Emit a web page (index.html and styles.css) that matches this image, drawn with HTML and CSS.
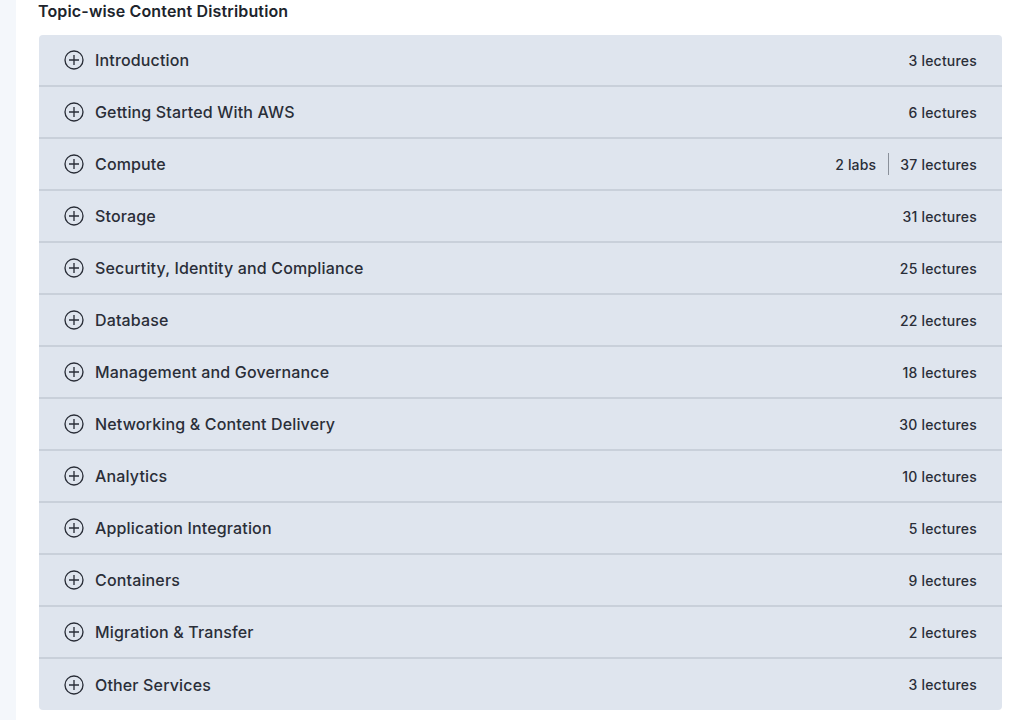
FILE: index.html
```html
<!DOCTYPE html>
<html>
<head>
<meta charset="utf-8">
<link rel="stylesheet" href="styles.css">
</head>
<body>
<div class="page">
  <aside class="strip"></aside>
  <main class="content">
    <h2 class="title">Topic-wise Content Distribution</h2>
    <div class="card">
      <div class="row"><div class="left"><svg class="ic" viewBox="0 0 20 20"><circle cx="10" cy="10" r="9"/><path d="M10 5v10M5 10h10"/></svg><span class="name">Introduction</span></div><div class="meta"><span>3 lectures</span></div></div>
      <div class="row"><div class="left"><svg class="ic" viewBox="0 0 20 20"><circle cx="10" cy="10" r="9"/><path d="M10 5v10M5 10h10"/></svg><span class="name">Getting Started With AWS</span></div><div class="meta"><span>6 lectures</span></div></div>
      <div class="row"><div class="left"><svg class="ic" viewBox="0 0 20 20"><circle cx="10" cy="10" r="9"/><path d="M10 5v10M5 10h10"/></svg><span class="name">Compute</span></div><div class="meta"><span>2 labs</span><span class="sep"></span><span>37 lectures</span></div></div>
      <div class="row"><div class="left"><svg class="ic" viewBox="0 0 20 20"><circle cx="10" cy="10" r="9"/><path d="M10 5v10M5 10h10"/></svg><span class="name">Storage</span></div><div class="meta"><span>31 lectures</span></div></div>
      <div class="row"><div class="left"><svg class="ic" viewBox="0 0 20 20"><circle cx="10" cy="10" r="9"/><path d="M10 5v10M5 10h10"/></svg><span class="name">Securtity, Identity and Compliance</span></div><div class="meta"><span>25 lectures</span></div></div>
      <div class="row"><div class="left"><svg class="ic" viewBox="0 0 20 20"><circle cx="10" cy="10" r="9"/><path d="M10 5v10M5 10h10"/></svg><span class="name">Database</span></div><div class="meta"><span>22 lectures</span></div></div>
      <div class="row"><div class="left"><svg class="ic" viewBox="0 0 20 20"><circle cx="10" cy="10" r="9"/><path d="M10 5v10M5 10h10"/></svg><span class="name">Management and Governance</span></div><div class="meta"><span>18 lectures</span></div></div>
      <div class="row"><div class="left"><svg class="ic" viewBox="0 0 20 20"><circle cx="10" cy="10" r="9"/><path d="M10 5v10M5 10h10"/></svg><span class="name">Networking &amp; Content Delivery</span></div><div class="meta"><span>30 lectures</span></div></div>
      <div class="row"><div class="left"><svg class="ic" viewBox="0 0 20 20"><circle cx="10" cy="10" r="9"/><path d="M10 5v10M5 10h10"/></svg><span class="name">Analytics</span></div><div class="meta"><span>10 lectures</span></div></div>
      <div class="row"><div class="left"><svg class="ic" viewBox="0 0 20 20"><circle cx="10" cy="10" r="9"/><path d="M10 5v10M5 10h10"/></svg><span class="name">Application Integration</span></div><div class="meta"><span>5 lectures</span></div></div>
      <div class="row"><div class="left"><svg class="ic" viewBox="0 0 20 20"><circle cx="10" cy="10" r="9"/><path d="M10 5v10M5 10h10"/></svg><span class="name">Containers</span></div><div class="meta"><span>9 lectures</span></div></div>
      <div class="row"><div class="left"><svg class="ic" viewBox="0 0 20 20"><circle cx="10" cy="10" r="9"/><path d="M10 5v10M5 10h10"/></svg><span class="name">Migration &amp; Transfer</span></div><div class="meta"><span>2 lectures</span></div></div>
      <div class="row"><div class="left"><svg class="ic" viewBox="0 0 20 20"><circle cx="10" cy="10" r="9"/><path d="M10 5v10M5 10h10"/></svg><span class="name">Other Services</span></div><div class="meta"><span>3 lectures</span></div></div>
    </div>
  </main>
</div>
</body>
</html>
```
FILE: styles.css
```css
html, body {
  margin: 0;
  padding: 0;
  background: #ffffff;
}
body {
  font-family: "Inter", "Noto Sans", sans-serif;
  color: #2a2e38;
}
.page {
  display: flex;
  min-height: 720px;
}
.strip {
  width: 16px;
  flex: none;
  background: #f4f7fb;
}
.content {
  flex: 1;
  padding: 0 22px 0 23px;
}
.title {
  margin: 0 0 11px -1px;
  height: 24px;
  line-height: 22px;
  font-size: 16px;
  font-weight: 600;
  letter-spacing: 0.15px;
  color: #20242c;
}
.card {
  background: #dfe5ee;
  border-radius: 4px;
  overflow: hidden;
}
.row {
  height: 52px;
  box-sizing: border-box;
  display: flex;
  align-items: center;
  justify-content: space-between;
  padding: 0 25px 0 25px;
  border-bottom: 2px solid #c9d0da;
}
.row:last-child {
  border-bottom: none;
  height: 51px;
}
.left {
  display: flex;
  align-items: center;
}
.ic {
  width: 20px;
  height: 20px;
  fill: none;
  stroke: #2a2e38;
  stroke-width: 1.35;
  margin-right: 11px;
}
.name {
  font-size: 16px;
  font-weight: 500;
  letter-spacing: 0.15px;
}
.meta {
  display: flex;
  align-items: center;
  font-size: 14px;
  font-weight: 500;
  letter-spacing: 0.2px;
}
.sep {
  width: 1px;
  height: 22px;
  background: #8a909a;
  margin: 0 11px 0 12px;
}
```
